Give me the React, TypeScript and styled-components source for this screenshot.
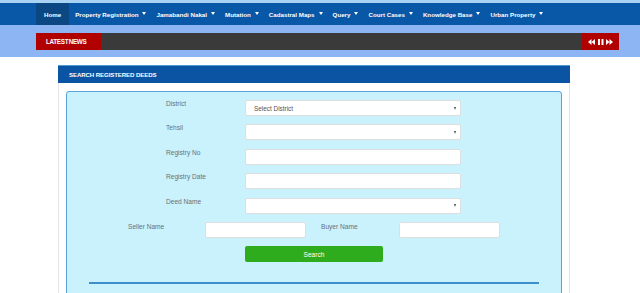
import styled, { createGlobalStyle } from "styled-components";

const GlobalStyle = createGlobalStyle`
  body {
    margin: 0;
    background: #ffffff;
    font-family: "Liberation Sans", Arial, sans-serif;
  }
`;

const TopStrip = styled.div`
  height: 3px;
  background: #a9d3f5;
`;

const NavBar = styled.nav`
  height: 22px;
  background: #0958a8;
  display: flex;
  padding-left: 36px;
`;

const NavItem = styled.div<{ $active?: boolean }>`
  display: flex;
  align-items: center;
  gap: 4px;
  padding: 0 ${(p) => (p.$active ? "8px" : "5px")};
  margin-right: ${(p) => (p.$active ? "1px" : "0")};
  background: ${(p) => (p.$active ? "#0b4783" : "transparent")};
  color: #ffffff;
  font-size: 6.2px;
  font-weight: bold;
  white-space: nowrap;
`;

const Caret = styled.span`
  width: 0;
  height: 0;
  border-left: 2px solid transparent;
  border-right: 2px solid transparent;
  border-top: 3px solid #ffffff;
  margin-top: -2px;
`;

const NewsBand = styled.div`
  background: #8eb5f3;
  padding: 8px 21px 7px 36px;
`;

const NewsBar = styled.div`
  display: flex;
  height: 17px;
`;

const NewsLabel = styled.div`
  width: 65px;
  background: #b10000;
  color: #ffffff;
  font-size: 6.3px;
  font-weight: bold;
  display: flex;
  align-items: center;
  padding-left: 10px;
  box-sizing: border-box;
  letter-spacing: -0.3px;
  word-spacing: -1px;
`;

const Ticker = styled.div`
  flex: 1;
  background: #3a3a3a;
`;

const Controls = styled.div`
  width: 37px;
  background: #b10000;
  display: flex;
  align-items: center;
  justify-content: center;
  gap: 2px;
`;

const Main = styled.main`
  padding: 8px 0 0 58px;
`;

const Panel = styled.section`
  width: 512px;
`;

const PanelHeader = styled.div`
  height: 17px;
  background: #0a54a3;
  border-top: 1px solid #4f9ad8;
  color: #ffffff;
  font-size: 6.1px;
  font-weight: bold;
  display: flex;
  align-items: center;
  padding-left: 11px;
  letter-spacing: -0.1px;
`;

const PanelBody = styled.div`
  padding: 8px 7px 0 7px;
  border: 1px solid #e3e3e3;
  border-top: none;
  height: 220px;
`;

const FormBox = styled.div`
  background: #c9f2fd;
  border: 1px solid #58a4d8;
  border-radius: 3px;
  padding-top: 8px;
  height: 100%;
`;

const Row = styled.div<{ $indent: number }>`
  display: flex;
  align-items: flex-start;
  padding-left: ${(p) => p.$indent}px;
  margin-bottom: 8.4px;
`;

const Label = styled.div<{ $width: number; $drop?: number }>`
  width: ${(p) => p.$width}px;
  flex-shrink: 0;
  color: #68707a;
  font-size: 6.6px;
  padding-top: ${(p) => p.$drop ?? 0}px;
  line-height: 7px;
`;

const Input = styled.div<{ $width: number }>`
  width: ${(p) => p.$width}px;
  height: 16px;
  box-sizing: border-box;
  background: #ffffff;
  border: 1px solid #dedede;
  border-radius: 2px;
  flex-shrink: 0;
`;

const Select = styled(Input)`
  display: flex;
  align-items: center;
  justify-content: space-between;
  padding: 0 4px 0 8px;
  color: #555555;
  font-size: 6.4px;
`;

const SelectArrow = styled.span`
  width: 0;
  height: 0;
  border-left: 1.5px solid transparent;
  border-right: 1.5px solid transparent;
  border-top: 3px solid #444444;
`;

const Spacer = styled.div<{ $width: number }>`
  width: ${(p) => p.$width}px;
  flex-shrink: 0;
`;

const SearchButton = styled.button`
  width: 138px;
  height: 16px;
  background: #2fac1e;
  border: none;
  border-radius: 2px;
  color: #ffffff;
  font-family: "Liberation Sans", Arial, sans-serif;
  font-size: 6.6px;
  padding: 0;
`;

const Divider = styled.div`
  margin: 20px 0 0 22px;
  width: 450px;
  height: 2px;
  background: #3b8fca;
`;

const navItems = [
  "Property Registration",
  "Jamabandi Nakal",
  "Mutation",
  "Cadastral Maps",
  "Query",
  "Court Cases",
  "Knowledge Base",
  "Urban Property",
];

const fields = [
  { label: "District", kind: "select", value: "Select District" },
  { label: "Tehsil", kind: "select", value: "" },
  { label: "Registry No", kind: "input", value: "" },
  { label: "Registry Date", kind: "input", value: "" },
  { label: "Deed Name", kind: "select", value: "" },
];

const Icon = ({ kind }: { kind: "prev" | "pause" | "next" }) => (
  <svg width="7" height="6" viewBox="0 0 7 6">
    {kind === "prev" && <path d="M3.5 0 L0 3 L3.5 6 Z M7 0 L3.5 3 L7 6 Z" fill="#fff" />}
    {kind === "pause" && <path d="M1 0 H3 V6 H1 Z M4.5 0 H6.5 V6 H4.5 Z" fill="#fff" />}
    {kind === "next" && <path d="M0 0 L3.5 3 L0 6 Z M3.5 0 L7 3 L3.5 6 Z" fill="#fff" />}
  </svg>
);

export default function App() {
  return (
    <>
      <GlobalStyle />
      <TopStrip />
      <NavBar>
        <NavItem $active>Home</NavItem>
        {navItems.map((item) => (
          <NavItem key={item}>
            {item}
            <Caret />
          </NavItem>
        ))}
      </NavBar>
      <NewsBand>
        <NewsBar>
          <NewsLabel>LATEST NEWS</NewsLabel>
          <Ticker />
          <Controls>
            <Icon kind="prev" />
            <Icon kind="pause" />
            <Icon kind="next" />
          </Controls>
        </NewsBar>
      </NewsBand>
      <Main>
        <Panel>
          <PanelHeader>SEARCH REGISTERED DEEDS</PanelHeader>
          <PanelBody>
            <FormBox>
              {fields.map((f) => (
                <Row $indent={99} key={f.label}>
                  <Label $width={79}>{f.label}</Label>
                  {f.kind === "select" ? (
                    <Select $width={216}>
                      <span>{f.value}</span>
                      <SelectArrow />
                    </Select>
                  ) : (
                    <Input $width={216} />
                  )}
                </Row>
              ))}
              <Row $indent={61}>
                <Label $width={77} $drop={1}>Seller Name</Label>
                <Input $width={101} />
                <Spacer $width={15} />
                <Label $width={78} $drop={1}>Buyer Name</Label>
                <Input $width={101} />
              </Row>
              <Row $indent={178}>
                <SearchButton>Search</SearchButton>
              </Row>
              <Divider />
            </FormBox>
          </PanelBody>
        </Panel>
      </Main>
    </>
  );
}
